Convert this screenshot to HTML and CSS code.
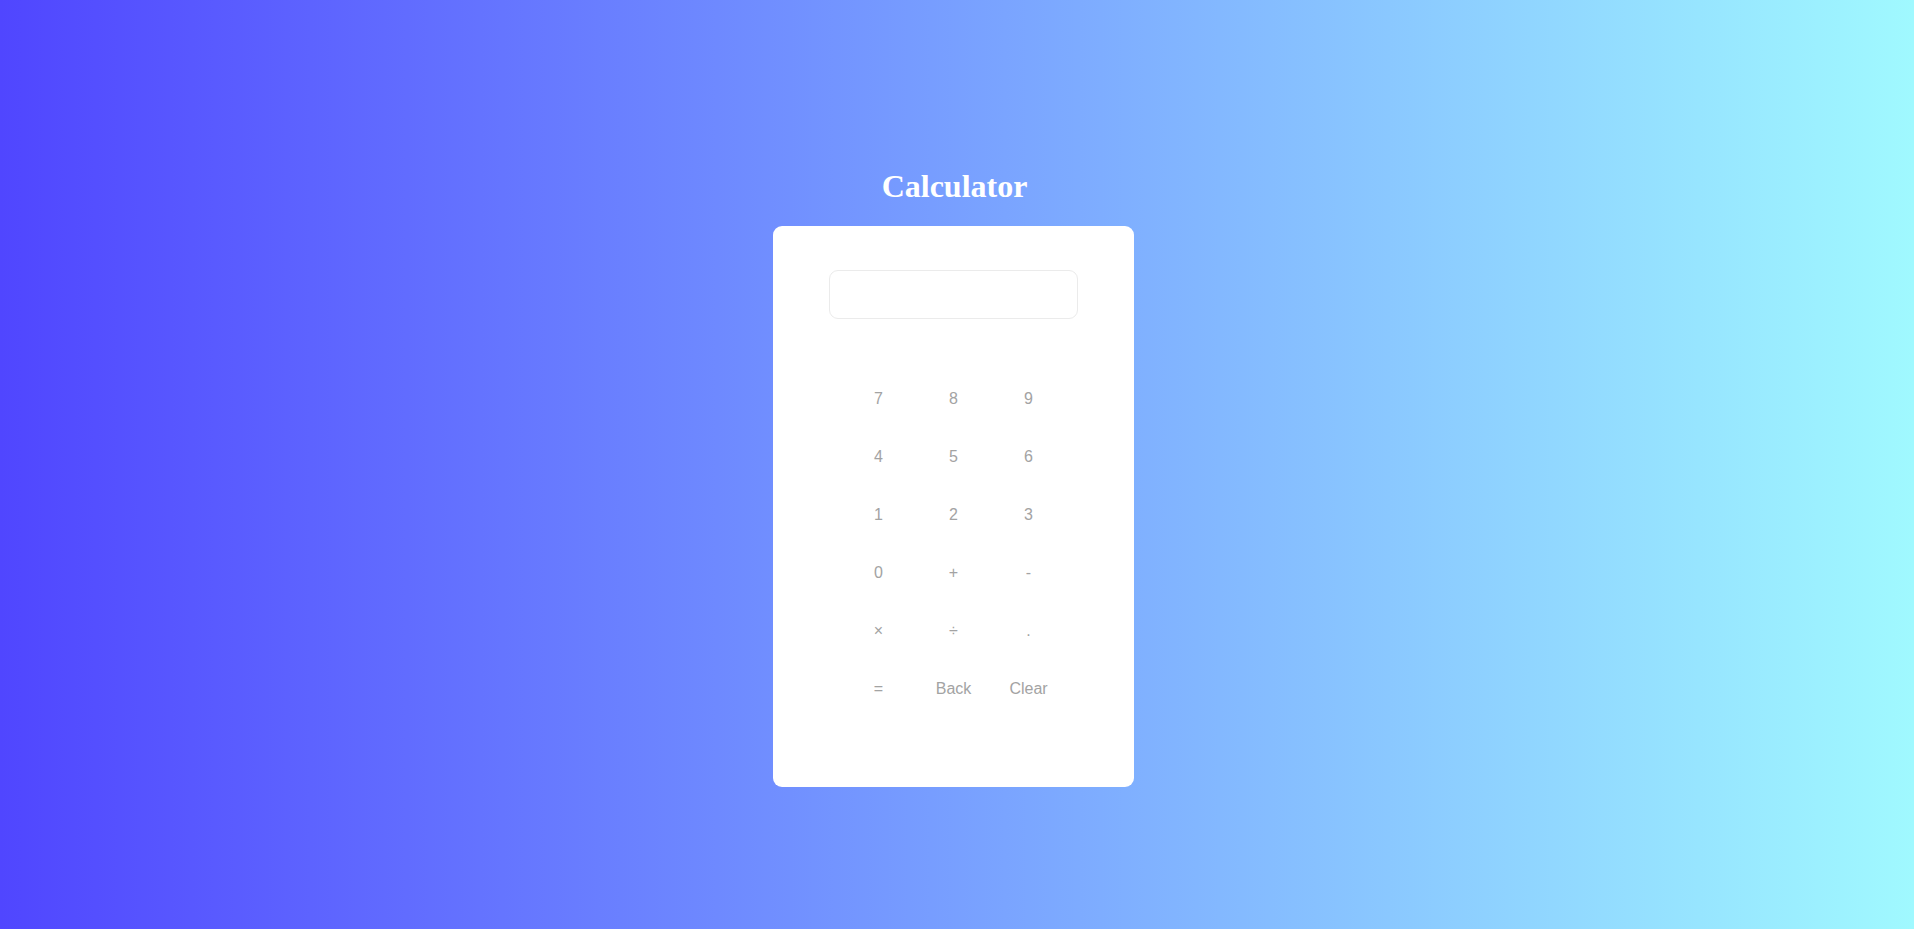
FILE: index.html
```html
<!DOCTYPE html>
<html lang="en">
<head>
<meta charset="UTF-8">
<title>Calculator</title>
<link rel="stylesheet" href="styles.css">
</head>
<body>
  <h1 class="title">Calculator</h1>
  <div class="calculator">
    <input class="display" type="text" readonly>
    <div class="keys">
      <button class="key">7</button>
      <button class="key">8</button>
      <button class="key">9</button>
      <button class="key">4</button>
      <button class="key">5</button>
      <button class="key">6</button>
      <button class="key">1</button>
      <button class="key">2</button>
      <button class="key">3</button>
      <button class="key">0</button>
      <button class="key">+</button>
      <button class="key">-</button>
      <button class="key">×</button>
      <button class="key">÷</button>
      <button class="key">.</button>
      <button class="key">=</button>
      <button class="key">Back</button>
      <button class="key">Clear</button>
    </div>
  </div>
</body>
</html>
```

FILE: styles.css
```css
html, body {
  margin: 0;
  padding: 0;
}

body {
  box-sizing: border-box;
  min-height: 100vh;
  padding: 4px 7px 0 0;
  display: flex;
  flex-direction: column;
  align-items: center;
  justify-content: center;
  background: linear-gradient(to right, #5046ff, #a0f9ff);
  font-family: "Liberation Serif", "Times New Roman", serif;
}

.title {
  margin: 21px 0 21px;
  font-size: 32px;
  font-weight: bold;
  color: #ffffff;
  line-height: 37px;
  transform: translateX(1px);
}

.calculator {
  box-sizing: border-box;
  width: 361px;
  height: 561px;
  background: #ffffff;
  border-radius: 9px;
  padding: 44px 0 0;
  display: flex;
  flex-direction: column;
  align-items: center;
}

.display {
  box-sizing: border-box;
  width: 249px;
  height: 49px;
  border: 1px solid #ebebeb;
  border-radius: 9px;
  background: #ffffff;
  outline: none;
  font-family: "Liberation Sans", Arial, sans-serif;
  font-size: 16px;
}

.keys {
  margin-top: 51px;
  display: grid;
  grid-template-columns: repeat(3, 75px);
  grid-auto-rows: 58px;
}

.key {
  border: none;
  background: transparent;
  padding: 0;
  margin: 0;
  font-family: "Liberation Sans", Arial, sans-serif;
  font-size: 16px;
  color: #a3a3a3;
  cursor: pointer;
}
```
